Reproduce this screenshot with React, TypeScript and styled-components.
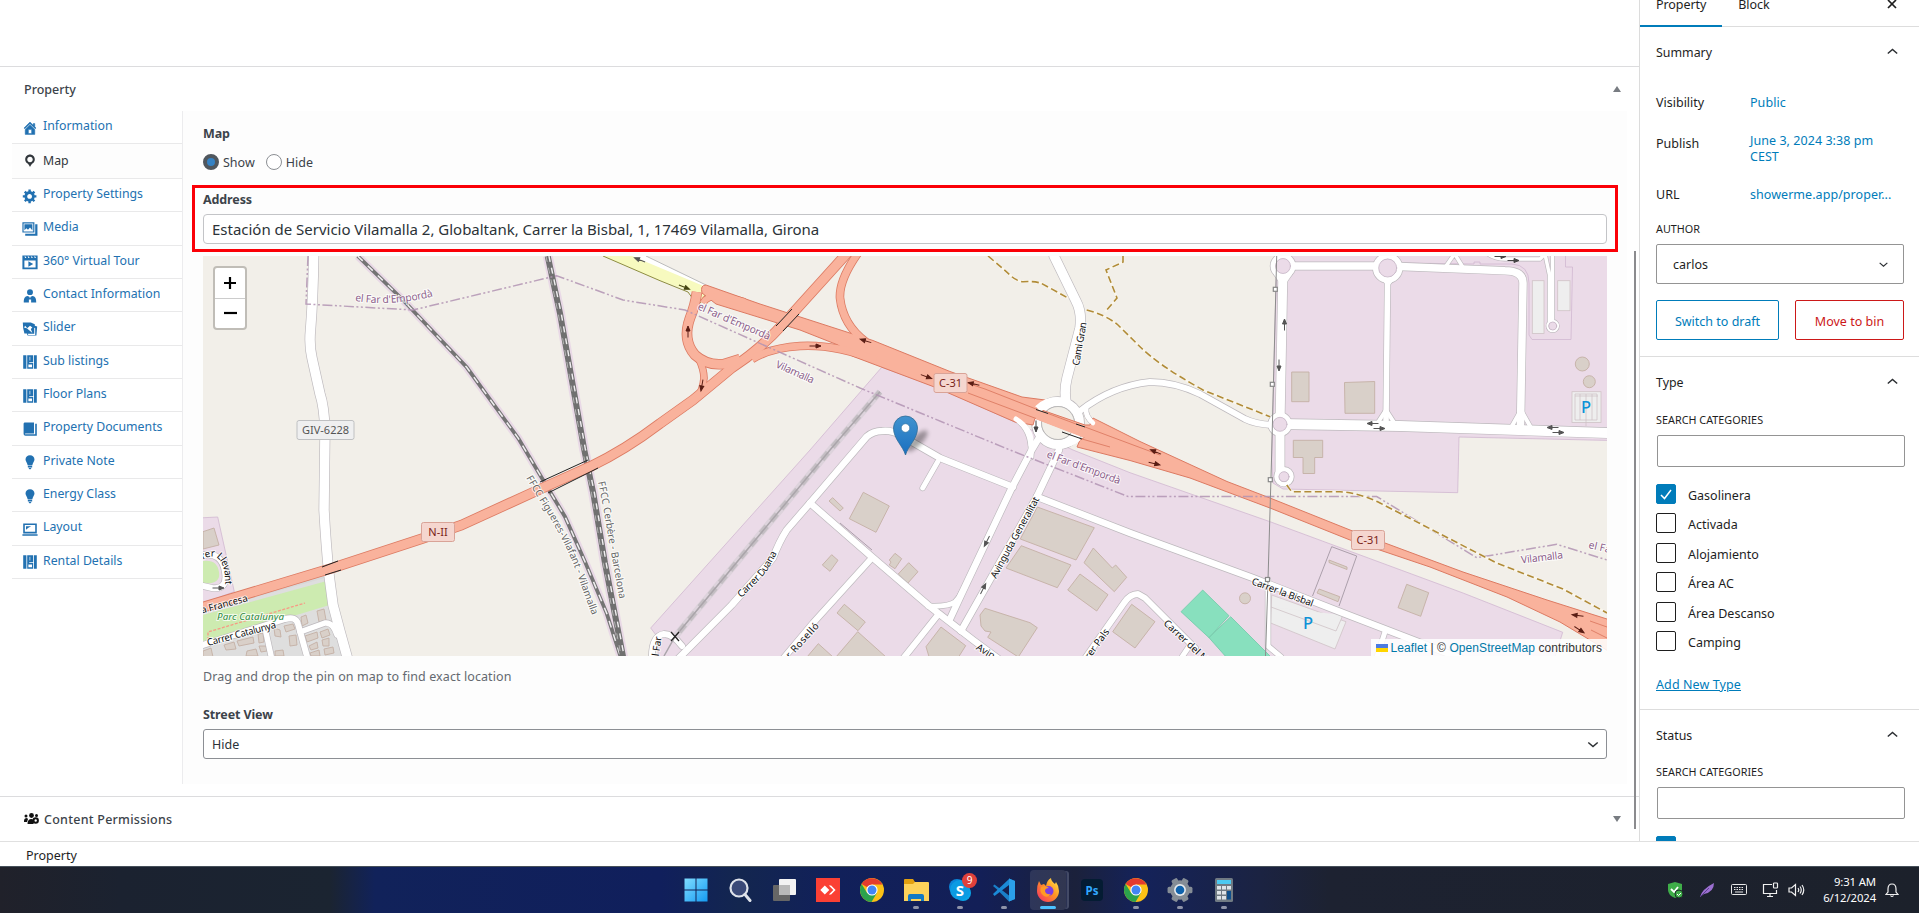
import React from "react";
import styled, { createGlobalStyle, css } from "styled-components";

const GlobalStyle = createGlobalStyle`
  *, *::before, *::after { box-sizing: border-box; }
  html, body { margin: 0; padding: 0; overflow: hidden; }
  body { font-family: "Noto Sans", "Open Sans", sans-serif; font-size: 12.5px; color: #1e1e1e; background: #fff; }
`;

const Screen = styled.div`
  width: 1919px;
  height: 913px;
  display: flex;
  flex-direction: column;
  background: #fff;
`;
const Workspace = styled.div`
  display: flex;
  height: 841px;
`;
const Editor = styled.main`
  position: relative;
  width: 1639px;
  height: 841px;
  padding-top: 66px;
`;
const ScrollThumb = styled.div`
  position: absolute;
  left: 1634px;
  top: 251px;
  width: 2px;
  height: 578px;
  background: #8b8b8e;
`;
const MetaHeader = styled.header<{ $height: number }>`
  display: flex;
  align-items: center;
  justify-content: space-between;
  height: ${(p) => p.$height}px;
  padding: 0 18px 0 24px;
  border-top: 1px solid #dcdcde;
  font-weight: 500;
  color: #3c434a;
`;
const HeaderTitle = styled.span<{ $spacing?: number }>`
  display: flex;
  align-items: center;
  gap: 5px;
  letter-spacing: ${(p) => p.$spacing ?? 0}px;
`;
const Triangle = styled.i<{ $down?: boolean }>`
  border: 4px solid transparent;
  ${(p) =>
    p.$down
      ? css`border-top: 6px solid #787c82; border-bottom: 0;`
      : css`border-bottom: 6px solid #787c82; border-top: 0;`}
`;
const MetaBody = styled.div`
  display: flex;
  height: 673px;
  margin: 0 12px 12px;
`;
const Tabs = styled.nav`
  width: 170px;
  font-size: 12.3px;
`;
const Tab = styled.a<{ $active?: boolean }>`
  display: flex;
  align-items: center;
  gap: 4px;
  height: ${(p) => (p.$active ? 34.6 : 33.33)}px;
  padding: ${(p) => (p.$active ? "0 0 2px 9px" : "0 0 3px 9px")};
  border-bottom: 1px solid #e9e9ea;
  color: ${(p) => (p.$active ? "#32373c" : "#2271b1")};
  background: ${(p) => (p.$active ? "#fdfdfd" : "#fff")};
  svg { margin-top: ${(p) => (p.$active ? 2 : 4)}px; }
`;
const Panel = styled.section`
  display: flex;
  flex-direction: column;
  width: 1445px;
  padding: 14px 20px 0;
  border-left: 1px solid #ececee;
  background: #fdfdfd;
`;
const FieldLabel = styled.div<{ $gap?: number }>`
  height: 18px;
  line-height: 18px;
  margin-bottom: ${(p) => p.$gap ?? 0}px;
  font-weight: 700;
  letter-spacing: -0.12px;
  color: #3c434a;
`;
const RadioRow = styled.div`
  display: flex;
  gap: 11px;
  height: 20px;
  margin-bottom: 19px;
  color: #3c434a;
`;
const RadioLabel = styled.label`
  display: flex;
  align-items: center;
  gap: 4px;
`;
const Radio = styled.span<{ $checked?: boolean }>`
  width: 16px;
  height: 16px;
  border-radius: 50%;
  border: ${(p) => (p.$checked ? "4px solid #50575e" : "1px solid #8c8f94")};
  background: ${(p) => (p.$checked ? "#3582c4" : "#fff")};
`;
const Highlight = styled.div`
  position: absolute;
  left: 192px;
  top: 185px;
  width: 1426px;
  height: 67px;
  border: 3px solid #fb0007;
`;
const AddressInput = styled.div`
  height: 30px;
  line-height: 29px;
  padding-left: 8px;
  margin-bottom: 12px;
  border: 1px solid #c3c4c7;
  border-radius: 4px;
  background: #fff;
  font-size: 15px;
  letter-spacing: -0.015px;
  color: #2c3338;
`;
const MapBox = styled.div`
  position: relative;
  height: 400px;
  flex: none;
  > svg { display: block; }
`;
const ZoomControl = styled.div`
  position: absolute;
  left: 10px;
  top: 10px;
  width: 34px;
  height: 64px;
  border: 2px solid #c0bdb7;
  border-radius: 4px;
  background: #fff;
`;
const ZoomButton = styled.div`
  display: flex;
  align-items: center;
  justify-content: center;
  height: 30px;
  & + & { border-top: 1px solid #ccc; padding-bottom: 2px; }
`;
const Attribution = styled.div`
  position: absolute;
  right: 0;
  bottom: 0;
  display: flex;
  align-items: center;
  gap: 3px;
  height: 17px;
  padding: 0 5px;
  background: rgba(255, 255, 255, 0.85);
  font: 12px "Liberation Sans", sans-serif;
  letter-spacing: 0.07px;
  color: #333;
  white-space: pre;
  b { font-weight: 400; color: #0078a8; }
`;
const Hint = styled.p`
  height: 18px;
  line-height: 18px;
  margin: 12px 0 20px;
  letter-spacing: 0.09px;
  color: #646970;
`;
const StreetSelect = styled.div`
  display: flex;
  align-items: center;
  justify-content: space-between;
  height: 30px;
  padding: 0 6px 0 8px;
  border: 1px solid #8c8f94;
  border-radius: 3px;
  background: #fff;
  color: #2c3338;
`;
const Breadcrumb = styled.footer`
  height: 25px;
  padding: 0 26px;
  line-height: 27px;
  border-top: 1px solid #e0e0e0;
`;

/* Settings sidebar */
const Sidebar = styled.aside`
  width: 280px;
  height: 841px;
  overflow: hidden;
  border-left: 1px solid #dcdcdc;
`;
const SideTabs = styled.div`
  display: flex;
  height: 27px;
  border-bottom: 1px solid #ddd;
`;
const SideTab = styled.div<{ $active?: boolean }>`
  height: 27px;
  padding: 0 16px;
  line-height: 9px;
  letter-spacing: -0.07px;
  border-bottom: ${(p) => (p.$active ? "2px solid #007cba" : "0")};
`;
const CloseSlot = styled.div`
  margin: -3px 21px 0 auto;
`;
const Section = styled.section<{ $height: number }>`
  height: ${(p) => p.$height}px;
  padding: 0 14px 0 16px;
  border-bottom: 1px solid #ddd;
`;
const SectionHead = styled.h2<{ $height: number }>`
  display: flex;
  align-items: center;
  justify-content: space-between;
  height: ${(p) => p.$height}px;
  margin: 0;
  padding-right: 7px;
  font-size: 12.4px;
  font-weight: 400;
  svg { margin-top: -2px; }
`;
const InfoRow = styled.div<{ $height: number; $lift?: number }>`
  display: flex;
  align-items: center;
  height: ${(p) => p.$height}px;
  line-height: 15.8px;
  > span { width: 94px; margin-top: ${(p) => -(p.$lift ?? 0)}px; }
`;
const Value = styled.a`
  width: 150px;
  color: #007cba;
  letter-spacing: 0.05px;
`;
const Caps = styled.div<{ $top: number }>`
  height: 16px;
  line-height: 16px;
  margin: ${(p) => p.$top}px 0 7px;
  font-size: 10.8px;
  letter-spacing: 0.02px;
  text-transform: uppercase;
`;
const AuthorSelect = styled.div`
  display: flex;
  align-items: center;
  justify-content: space-between;
  width: 248px;
  height: 40px;
  padding: 0 15px 0 16px;
  border: 1px solid #949494;
  border-radius: 2px;
`;
const ButtonRow = styled.div`
  display: flex;
  gap: 16px;
  margin-top: 16px;
`;
const OutlineButton = styled.div<{ $color: string; $width: number }>`
  width: ${(p) => p.$width}px;
  height: 40px;
  line-height: 41px;
  text-align: center;
  border: 1px solid ${(p) => p.$color};
  border-radius: 2px;
  color: ${(p) => p.$color};
`;
const SearchInput = styled.div`
  width: 248px;
  height: 32px;
  margin-left: 1px;
  border: 1px solid #949494;
  border-radius: 2px;
`;
const CheckList = styled.div`
  margin-top: 17px;
`;
const CheckRow = styled.label`
  display: flex;
  gap: 12px;
  height: 29.45px;
  line-height: 23px;
`;
const CheckBox = styled.span<{ $checked?: boolean }>`
  display: flex;
  width: 20px;
  height: 20px;
  border: 1px solid ${(p) => (p.$checked ? "#007cba" : "#1e1e1e")};
  border-radius: 2px;
  background: ${(p) => (p.$checked ? "#007cba" : "#fff")};
`;
const AddLink = styled.a`
  display: block;
  margin-top: 15px;
  color: #007cba;
  letter-spacing: 0.1px;
  text-decoration: underline;
`;

/* Taskbar */
const Taskbar = styled.div`
  display: flex;
  align-items: flex-start;
  height: 47px;
  border-top: 1px solid #46505a;
  padding-left: 674px;
  background: linear-gradient(90deg, #20212a 0, #1b2230 120px, #1b2431 330px, #11225a 375px, #101f5c 660px, #13264f 740px, #11205a 830px, #131f57 980px, #1b213b 1075px, #14225a 1140px, #1b2342 1260px, #1d2231 1330px, #1c212b 1919px);
`;
const AppSlot = styled.div<{ $active?: boolean }>`
  position: relative;
  display: flex;
  align-items: center;
  justify-content: center;
  width: 36px;
  height: 40px;
  margin: 3px 4.02px 0;
  border-radius: 4px;
  ${(p) =>
    p.$active &&
    css`background: rgba(255, 255, 255, 0.1); box-shadow: 2px 0 0 -1px #2a3153, 4px 0 0 -1px #434a66;`}
`;
const RunDot = styled.i<{ $active?: boolean }>`
  position: absolute;
  bottom: 1px;
  width: ${(p) => (p.$active ? 16 : 6)}px;
  height: 3px;
  border-radius: 2px;
  background: ${(p) => (p.$active ? "#4cc2ff" : "#8e93a8")};
`;
const Badge = styled.span`
  position: absolute;
  left: 20px;
  top: 3px;
  width: 15px;
  height: 15px;
  border-radius: 50%;
  background: #e0403a;
  color: #fff;
  font-size: 10px;
  line-height: 15px;
  text-align: center;
`;
const Tray = styled.div`
  display: flex;
  align-items: center;
  height: 46px;
  margin-left: auto;
  padding-right: 20px;
`;
const TrayIcon = styled.div<{ $gap: number }>`
  display: flex;
  margin-right: ${(p) => p.$gap}px;
`;
const Clock = styled.div`
  width: 62px;
  margin-right: 9px;
  font-size: 11.3px;
  line-height: 16px;
  letter-spacing: -0.1px;
  text-align: right;
  color: #fff;
  white-space: nowrap;
`;

/* ---------- icons ---------- */
const grid = (
  <path fillRule="evenodd" d="M1.500 1.500h4v17h-4zM6.500 1.500h7.500v17H6.500zM9 10v1h5v-1zM9.500 3.500v4.500h.8V3.500zM8 13v3.500h4.500V13zM15 1.500h3.500v17H15z" />
);
const bulb = <path d="M10 1.500c-3.300 0-5.600 2.400-5.600 5.300 0 2.400 2 3.800 2.700 7.200h5.800c.7-3.400 2.700-4.800 2.700-7.200 0-2.900-2.300-5.300-5.600-5.300zM7.300 14.800h5.400v2H7.300zM8.200 17.500h3.600L10.800 19H9.200z" />;
const tabIcons: Record<string, React.ReactNode> = {
  home: <path d="M16 8.500l1.530 1.530-1.060 1.060L10 4.600l-6.470 6.490-1.060-1.060L10 2.500l4 4v-2h2v4zm-6-2.460l6 5.990V18H4v-5.970zM12 17v-5H8v5h4z" stroke="currentColor" strokeWidth=".6" />,
  pin: <path d="M10 2C6.690 2 4 4.690 4 8c0 2.020 1.170 3.710 2.530 4.890.43.37 1.180.96 1.850 1.830.74.97 1.410 2.010 1.620 2.710.21-.7.88-1.740 1.620-2.710.67-.87 1.420-1.460 1.850-1.830C14.830 11.710 16 10.020 16 8c0-3.310-2.690-6-6-6zm0 2.560c1.900 0 3.440 1.540 3.440 3.440S11.900 11.440 10 11.440 6.560 9.900 6.560 8 8.100 4.560 10 4.560z" />,
  gear: <path d="M18 12h-2.180c-.17.7-.44 1.350-.81 1.930l1.540 1.540-2.100 2.100-1.540-1.540c-.58.36-1.230.63-1.910.79V19H8v-2.180c-.68-.16-1.330-.43-1.910-.79l-1.540 1.540-2.120-2.120 1.540-1.540c-.36-.58-.63-1.230-.79-1.910H1V9.030h2.170c.16-.7.44-1.350.8-1.940L2.430 5.550l2.100-2.100 1.540 1.540c.58-.37 1.240-.64 1.930-.81V2h3v2.180c.68.16 1.330.43 1.910.79l1.540-1.540 2.120 2.120-1.540 1.540c.36.59.64 1.240.8 1.940H18V12zm-8.500 1.500c1.660 0 3-1.340 3-3s-1.340-3-3-3-3 1.340-3 3 1.340 3 3 3z" />,
  media: <path fillRule="evenodd" d="M.5 1.500h15v13H.5zM2 3v10h12V3zM3 4h10v8l-3-4-2.500 3-2-2L3 11.500zM16.500 4h2.800v14.500H4V16h12.500z" />,
  video: <path fillRule="evenodd" d="M.5 2h19v17H.5zM3 8v9h14V8zM8 9l6 3.500L8 16zM3 3l1 2h1.500l-1-2zM7 3l1 2h1.500l-1-2zM11 3l1 2h1.500l-1-2zM15 3l1 2h1.500l-1-2z" />,
  person: <path d="M10 1.500a3.700 3.700 0 1 1 0 7.400A3.700 3.700 0 0 1 10 1.500zM7 10l2.200 1L10 13l.8-2L13 10c3.600.6 4.800 2.800 4.800 8h-6.400v-3.500H8.600V18H2.200c0-5.200 1.200-7.400 4.800-8z" />,
  slides: <path fillRule="evenodd" d="M1 2h10l5 2v2l3 1-1 11H7l-1-2.500H3L1.500 9zM4 6l2.500 3 3.500-3 3 2-2 2 2 5-7-6-3.500-1zM7 16l1 1.500h8.500V9l-1.200-.6V16z" />,
  grid,
  book: <path d="M2 3.500C2 2.500 3 2 4 2h11v13.500H4.500c-1.300 0-1.300 1.200 0 1.200h12V3.500H18.500V18.500H4.500C3 18.500 2 17.500 2 16z" />,
  bulb,
  laptop: <path fillRule="evenodd" d="M1.500 3h17v12.500h-17zM3.500 5v8.500h13V5zM5 6.500h6.500L8 8.500 5 11zM.5 16.500h19v2H.5z" />,
};
const TabGlyph = ({ name }: { name: string }) => (
  <svg width="18" height="16" viewBox="0 0 20 20" fill="currentColor" color="currentColor" fillRule="evenodd">{tabIcons[name]}</svg>
);
const Chevron = ({ up, size = 11 }: { up?: boolean; size?: number }) => (
  <svg width={size} height={7} viewBox="0 0 11 7" fill="none" stroke="#2c2f33" strokeWidth="1.500">
    <path d={up ? "M.8 5.500 5.500 1.500l4.700 4" : "M.8 1.500 5.500 5.500l4.700-4"} />
  </svg>
);

/* ---------- map drawing ---------- */
const buildings = [
  "863.3,492.3 889.3,506 876,532.3 849.3,518.7", "832.7,497.7 843.3,508 840,511 829,501",
  "831.7,554.7 838,560.3 830,571.3 822.3,565", "895,553.3 901.7,558.7 895,568.7 889.3,565 891,562 889.3,560",
  "908.7,562.7 918,571.7 907.7,583.3 898.3,574", "1037.3,507 1094.3,527.7 1076,560 1020.3,539",
  "1021.3,545.7 1071,565 1057.3,587.7 1006,568", "1093.3,548 1112.3,568 1115.7,565 1126.7,577.3 1114.3,591.7 1084,562.7",
  "1080,574 1108,594.7 1096.7,611 1067.7,590", "985,608.3 1030,622.7 1037.3,627.7 1018.3,657 987.7,637.3 991,632 985,631 981,626 980,615",
  "941,627 965.7,645.7 956.7,660 930,660 926,646.7", "844.3,604.3 865.3,622 858,630.7 837,613",
  "857.7,631.7 886,657 836,657", "818.3,643.7 833,657 807,657", "1131.7,604.3 1155,621.7 1135,648 1112.7,631.7",
  "1406.7,584.3 1428.7,592.7 1420.7,616.3 1398,607.7", "1329,560 1347,567 1347,569.5 1329,562.5",
  "1319,589 1339.7,596.7 1338,601.7 1317,593", "203,531.7 214,528 219,545 203,549",
  "1291.7,372 1309,372 1309,401.7 1291.7,401.7", "1344.5,382.5 1374.7,381.5 1374.7,413.3 1345,413.3",
  "1293.3,440.3 1322.7,440.3 1322.7,457.5 1314.7,457.5 1314.7,473.5 1303,473.5 1303,457.5 1293.3,457.5",
  "301,617 306,615 308,623 302,626", "317,611 324,609 326,620 319,622", "284,626 293,624 295,629 286,632",
  "274,628 280,630 281,637 275,636", "289,636 296,635 297,645 290,646", "305,636 317,632 318,638 307,642",
  "320,632 328,629 330,635 322,638", "237,641 253,637 254,643 239,646", "258,634 263,633 264,642 259,643",
  "224,645 234,642 236,649 226,650", "203,651 211,648 213,657 203,657", "247,651 256,649 258,656 246,656",
  "275,651 283,650 284,656 275,656", "309,646 317,642 318,648 311,650", "322,640 329,638 329,646 323,646",
  "310,653 319,650 320,656 311,656", "324,649 333,647 334,653 325,655", "259,646 266,646 267,651 261,652",
];

interface RoadSpec { d: string; w: number }
const whiteRoads: RoadSpec[] = [
  { d: "M313.700 250V256Q313 300 310.500 330Q309 345 312 358L320 394Q324 406 325 430L324 510Q326 545 329 575L333 605Q340 632 348 660", w: 9.5 },
  { d: "M203 645 285 619Q296 616 298 624L308 660", w: 6 }, { d: "M300 632 325 623Q333 622 337 635", w: 5.5 }, { d: "M265 628 272 660", w: 5.5 },
  { d: "M203 555Q222 552 225 572Q228 590 212 588L203 586", w: 6 },
  { d: "M677 660 731.700 605 773 558Q779 542 786.700 530L810 503 866.700 436.700Q873 431 882 431 892 430 900 435L940 458 1013 487", w: 6.5 },
  { d: "M937.700 461.700 922.700 488", w: 5 }, { d: "M810 503 871.700 556.700 930 606.700 973 640 1000 660", w: 6.5 },
  { d: "M870 560 813 623 782 660", w: 6 }, { d: "M937 616 902 660", w: 6 },
  { d: "M928 606Q948 607 955 602Q960 597 962 592", w: 5 },
  { d: "M1040 436 1031.700 450 1011.700 488 962 593 950 619", w: 6.5 },
  { d: "M1016 419Q1033 430 1031 457", w: 5 }, { d: "M1059 445V450L1036.700 497 961 631", w: 6.5 },
  { d: "M1036.700 496.700 1130 533 1253 578 1343 613 1460 658", w: 6.5 },
  { d: "M1268 580V646L1281 657", w: 5 }, { d: "M1385 631.700 1376 660", w: 5 },
  { d: "M1084 660 1124 603Q1130 594 1138 594L1145 598 1195 648", w: 6 }, { d: "M1188 648 1182 657", w: 5 },
  { d: "M1054 250V256L1076 301Q1082 312 1080 328L1067 378Q1064 390 1066 402", w: 9.5 },
  { d: "M1080 411Q1112 386 1150 382Q1175 382 1200 394L1245 419Q1255 424 1272 425", w: 6 },
  { d: "M1086 408Q1085 416 1093 423", w: 4.5 },
  { d: "M652 660Q651 636 664 634Q673 634 682 646", w: 6 },
  { d: "M1283 266H1387.700L1505 270.700Q1523 271 1523 283L1520.500 424", w: 7.5 },
  { d: "M1283 266 1280 424V472", w: 9 }, { d: "M1387.700 268 1386 424", w: 5.5 },
  { d: "M1280 424 1400 426 1610 433", w: 10 },
  { d: "M1386 410 1377 424M1386 410 1395 424M1521 410 1512 426M1521 410 1530 426M1388 284 1380 275M1388 284 1396 275M1283 284 1276 274M1283 284 1290 274", w: 4 },
  { d: "M1453 256 1444 269M1456 256 1464 269M1488 254Q1495 259 1505 259H1540L1545 254", w: 3.5 },
  { d: "M1545 254 1549.500 275V322M1552.500 254V322", w: 3.5 },
];
const orangeRoads: RoadSpec[] = [
  { d: "M200 608 331.700 568.300 423.300 538.300 461.700 525 543.300 487.700 590 466.700Q625 450 660 423.500L693 400 731.700 368Q760 350 786.700 320L850 250", w: 9 },
  { d: "M858 253Q839 280 840 298Q843 325 866 342", w: 7 },
  { d: "M697 292Q695 306 690 318Q682 340 695 355Q707 366 724 364L740 359", w: 9 },
  { d: "M699 359Q704 370 704 378Q703 390 697 398", w: 6 },
  { d: "M752 359Q770 348 800 346 835 344 876 360", w: 7 },
  { d: "M703 303Q707 295 722 296L745 302", w: 6 },
];
const borders = [
  "M308 256 306 304 413 310 556.700 275.700 623 300 685 310 860 388 1010 450 1128 496.500H1376.700L1476.700 557.700 1556.700 544.300 1607 560",
];
const paths = [
  "M988 256Q1000 266 1010 275 1016 281 1023 281.700 1035 281 1041.700 283.500L1068 298M1086.700 310Q1106 315 1118 325L1140 346.700Q1158 365 1203 390L1270 416.700",
  "M1123 256V262L1106 270 1117 298 1105 312",
  "M1286.700 485 1291.700 491.700H1340Q1360 493 1380 503L1496.700 563 1563 589 1607 613",
];
const arrows: [number, number, number, string][] = [
  [684, 287, 22, "#454512"], [640, 260, 202, "#555"], [688, 332, -90, "#5a1d14"], [702, 385, 100, "#5a1d14"],
  [815, 346, 0, "#5a1d14"], [866, 341, 197, "#5a1d14"], [926, 376.5, 20, "#5a1d14"], [974, 384, 194, "#5a1d14"],
  [1036, 426, 90, "#444"], [987, 541, 117, "#555"], [983, 589, -63, "#555"], [1284.5, 325, -90, "#555"],
  [1279, 365, 90, "#555"], [1373, 423.5, 180, "#555"], [1379, 428.5, 0, "#555"], [1553, 427.5, 180, "#555"],
  [1558, 432.5, 0, "#555"], [1513, 260.5, 0, "#444"], [1500, 256.5, 0, "#444"], [1156, 452, 203, "#5a1d14"], [1154, 463.5, 13, "#5a1d14"],
  [1578, 615.5, 187, "#5a1d14"], [1579, 629.5, 33, "#5a1d14"], [218, 588, 0, "#555"],
];
const highSpeedRail = "M357.700 256 403 300 466.700 367.300 518.300 438.300 545 483.300 565 516.700 585 561.700 606.700 613.300 621 658";
const mainRail = "M547.700 256 560 313.300 584.300 450 593.300 493.300 605 563.300 623.300 658";
const oldRail = "M880 391.700 830 450 675 636.700";

const MapLabel = styled.text<{ $kind?: "admin" | "rail" | "street" }>`
  font-family: "Noto Sans", sans-serif;
  font-size: ${(p) => (p.$kind === "street" ? 9.8 : p.$kind === "rail" ? 10 : 10.4)}px;
  fill: ${(p) => (p.$kind === "admin" ? "#8d618b" : p.$kind === "rail" ? "#666" : "#111")};
  stroke: rgba(255, 255, 255, 0.75);
  stroke-width: 2px;
  paint-order: stroke;
`;
const ParkLabel = styled(MapLabel)`
  fill: #2c8a3c;
  font-style: italic;
  font-size: 9.8px;
`;
const ShieldText = styled.text`
  font-family: "Noto Sans", sans-serif;
  font-size: 11px;
  text-anchor: middle;
`;
const Label = (p: { x: number; y: number; r: number; kind: "admin" | "street"; len?: number; children: string }) => (
  <MapLabel $kind={p.kind} textLength={p.len} transform={`translate(${p.x} ${p.y}) rotate(${p.r})`}>{p.children}</MapLabel>
);
const Shield = (p: { x: number; y: number; w: number; text: string; gray?: boolean }) => (
  <g>
    <rect x={p.x - p.w / 2} y={p.y - 9} width={p.w} height={19} rx="2" fill={p.gray ? "#efeff0" : "#f5d6cf"} stroke={p.gray ? "#bfc0c2" : "#d9a397"} />
    <ShieldText x={p.x} y={p.y + 4.5} fill={p.gray ? "#555" : "#7a2419"}>{p.text}</ShieldText>
  </g>
);

const MapDrawing = () => (
  <svg width="1404" height="400" viewBox="203 256 1404 400" fill="none">
    <defs>
      <linearGradient id="pin" x1="0" y1="0" x2="0" y2="1"><stop offset="0" stopColor="#4193cf" /><stop offset="1" stopColor="#1a6fc0" /></linearGradient>
      <filter id="soft" x="-50%" y="-100%" width="200%" height="300%"><feGaussianBlur stdDeviation="2" /></filter>
      <path id="farTop" d="M355 301Q395 307 438 295" />
      <path id="figueres" d="M526 478Q538 498 548 514 570 552 577 574L593 618" />
      <path id="cerbere" d="M598 482Q604 510 608 536L620 602" />
      <path id="duana" d="M741 598Q760 580 767 571L780 548" />
      <path id="llevant" d="M203 560Q215 552 221 562 226 570 225 590" />
    </defs>
    <rect x="203" y="256" width="1404" height="400" fill="#f2efe9" />
    <g fill="#ebdbe8" stroke="#d0b8d0" strokeWidth=".8">
      <path d="M881.700 367.300 936.700 387 1017 423 1073 450 1130 472.700 1270 521.700 1463 593 1562.700 632.300 1554 660H659L656 635 650.700 628 810 450Z" />
      <path d="M1276.700 250V256L1271.700 460 1273 483 1283 489 1457.700 492.700 1459 437 1612 440.500V250Z" />
      <path d="M198 518 217.700 517 234.300 591.700 198 605Z" />
      <path d="M1403 263 1474 264V262H1480V264H1512Q1529 265 1529 283V335L1532 339.500H1571L1572.500 267H1565.500V256" />
    </g>
    <path d="M203 610 326 576 334 612 347 656H203Z" fill="#dedede" />
    <path d="M203 615 326.700 581 329.500 605 300 614 203 641ZM203 561Q217 559 219 572 221 585 203 583Z" fill="#cdebb0" />
    <path d="M208 640V632L305 603" stroke="#f79a85" strokeWidth="1.300" strokeDasharray="3 1.500" />
    <path d="M203 609 326 575" stroke="#d8d8d8" strokeWidth="5" />
    <g fill="#88e0be" stroke="#6fcaa7" strokeWidth=".8">
      <path d="M1202.700 590 1229 615.700 1209 637.700 1181 611.700Z" /><path d="M1230.700 616.700 1272 658H1227L1209 637.700Z" />
    </g>
    <g fill="#eee" stroke="#cfc3c6" strokeWidth=".8">
      <path d="M1271.700 595 1346 621.700 1335 649 1270.700 623Z" /><rect x="1572" y="391.700" width="29" height="30.700" />
      <rect x="1532.300" y="280.700" width="11.700" height="52.700" /><rect x="1557.700" y="280.700" width="12.300" height="30" />
      <path d="M1271 607 1336 631 1343 615M1575 394H1597V420H1575ZM1580 394V420M1592 394V420M1586 394V426M1575 396H1598" />
    </g>
    <g fill="#d9d0c9" stroke="#c4b0a5" strokeWidth=".9">
      {buildings.map((b) => <polygon key={b} points={b} />)}
      <circle cx="1582.300" cy="364" r="7" /><circle cx="1589.300" cy="381.700" r="6" /><circle cx="1245" cy="598.300" r="5.500" />
    </g>
    <path d="M1312.500 596 1331.700 546.700 1356.700 556 1339 606M840 523 872 550" stroke="#9b8f9b" strokeWidth=".8" />
    <g strokeLinejoin="round" strokeLinecap="round">
      <g stroke="#bdb9bd">
        {whiteRoads.map((r) => <path key={r.d} d={r.d} strokeWidth={r.w + 1.3} />)}
        <circle cx="1058" cy="423" r="21.500" strokeWidth="10.500" />
        <circle cx="1283" cy="266" r="10" strokeWidth="6.500" /><circle cx="1387.700" cy="268" r="12" strokeWidth="7" /><circle cx="1280" cy="424.300" r="9.500" strokeWidth="6" />
        <circle cx="1284" cy="476.700" r="7.500" strokeWidth="6" /><circle cx="1552.700" cy="326" r="5.200" strokeWidth="3.500" />
      </g>
      <g fill="#ebdbe8"><circle cx="1283" cy="266" r="8" /><circle cx="1387.700" cy="268" r="9" /><circle cx="1280" cy="424.300" r="7" /></g>
      <g stroke="#fff">
        {whiteRoads.map((r) => <path key={r.d} d={r.d} strokeWidth={r.w} />)}
        <circle cx="1058" cy="423" r="21.500" strokeWidth="9" />
        <circle cx="1283" cy="266" r="10" strokeWidth="5" /><circle cx="1387.700" cy="268" r="12" strokeWidth="5.500" /><circle cx="1280" cy="424.300" r="9.500" strokeWidth="4.500" />
        <circle cx="1284" cy="476.700" r="7.500" strokeWidth="4.500" /><circle cx="1552.700" cy="326" r="5.200" strokeWidth="2.300" />
      </g>
      <circle cx="1058" cy="423" r="16.500" fill="#f2efe9" stroke="#aaa" strokeWidth=".7" />
      <g fill="#ebdbe8" stroke="#c5b5c5" strokeWidth=".8"><circle cx="1283" cy="266" r="7.500" /><circle cx="1387.700" cy="268" r="9" /><circle cx="1280" cy="424.300" r="7" /><circle cx="1284" cy="476.700" r="5" /><circle cx="1552.700" cy="326" r="4" /></g>
    </g>
    {/* railways */}
    <g>
      <path d={oldRail} stroke="#ddd3dc" strokeWidth="7" />
      <path d={oldRail} stroke="#c4bec3" strokeWidth="5.500" strokeDasharray="9 7" />
      <path d={`${oldRail} 664 656`} stroke="#aaa5aa" strokeWidth="1.500" />
      <path d={highSpeedRail} stroke="#e9d9e6" strokeWidth="8" />
      <path d={mainRail} stroke="#e9d9e6" strokeWidth="10" />
      <path d={highSpeedRail} stroke="#747474" strokeWidth="3.800" />
      <path d={highSpeedRail} stroke="#f0eef0" strokeWidth="1.500" strokeDasharray="7 7" />
      <path d={mainRail} stroke="#707070" strokeWidth="6" />
      <path d={mainRail} stroke="#f0eef0" strokeWidth="1.400" strokeDasharray="6 6" transform="translate(1.200 0)" />
      <path d={mainRail} stroke="#d0d0d0" strokeWidth=".7" strokeDasharray="6 6" transform="translate(-1.800 0)" />
    </g>
    {/* primary roads */}
    <path d="M632 256H646L706 285 700 292Z" fill="#fff" /><path d="M646 256 706 285" stroke="#bbb" />
    <path d="M603 256H632L706 287 708 300 700 303 690 291 660 280.700Z" fill="#f7fabf" />
    <path d="M603 256 660 280.700 688 292 693 299M700 303 706 294" stroke="#8d8c42" />
    <g strokeLinejoin="round">
      {orangeRoads.map((r) => <path key={r.d} d={r.d} stroke="#dc7a62" strokeWidth={r.w + 1.6} />)}
      <path d="M706 285 760 304 873 340.500 950 371.500 1022 397 1045 400 1040 404 1036 408 1085 425 1090 425 1093 418 1140 441.500 1227 481.500 1270 498 1350 530 1463 572 1547 600 1610 620V652L1560 622 1507 597 1430 567 1350 540 1270 508 1190 478 1130 460.500 1077 447 1080 440 1085 437 1035 418 1033 425 1015 422 937 388 852 356 838 345 800 330 716 304 702 293Q700 285 706 285Z" fill="#f9b29c" stroke="#dc7a62" strokeWidth="1" />
      {orangeRoads.map((r) => <path key={r.d} d={r.d} stroke="#f9b29c" strokeWidth={r.w} />)}
    </g>
    <g stroke="#fff" strokeWidth="8"><path d="M1038 409Q1046 401 1058 401" /><path d="M1058 444Q1069 445 1078 437" /></g>
    <path d="M1016 419Q1033 430 1031 445" stroke="#fff" strokeWidth="5" strokeLinecap="round" />
    <path d="M1086 408Q1085 416 1093 423" stroke="#fff" strokeWidth="4.500" strokeLinecap="round" />
    <path d="M1035 409 1085 426 1110 434 1110 445 1082 437 1030 417Z" fill="#f9b29c" />
    <path d="M1036 409.500 1048 413.500M1076 424 1085 427M1062 432 1082 439" stroke="#222" strokeWidth="1" />
    <path d="M955 379 985 389 1036 409M968 393 1036 418.500M1048 413.500 1076 424M1085 427 1160 455M1082 439 1110 447M1590 621 1607 627M1591 630 1607 638" stroke="#dc7a62" strokeWidth=".9" />
    <path d="M776 326 792 309M783 331 799 314M540 482 588 460M548 493 598 468M322 567 338 561M325 575 341 570" stroke="#222" />
    {borders.map((d) => <path key={d} d={d} stroke="#b193b3" strokeWidth="1.500" strokeDasharray="10 2.500 2 2.500 2 2.500" opacity=".85" />)}
    {paths.map((d) => <g key={d}><path d={d} stroke="#faf6ec" strokeWidth="2.500" /><path d={d} stroke="#b08b38" strokeWidth="1.600" strokeDasharray="7 3.500" /></g>)}
    <path d="M1276.700 256 1271.500 460 1268 580 1265.500 656" stroke="#8c8c8c" />
    <g fill="#fff" stroke="#888" strokeWidth="1.200">
      {[[1275.3, 289.3], [1272.3, 384.3], [1270.3, 479.7], [1267.5, 579.5]].map(([x, y]) => <rect key={y} x={x - 2} y={y - 2} width="4" height="4" />)}
    </g>
    <path d="M671 632 679 641M679 632 671 641" stroke="#222" strokeWidth="1.200" />
    {arrows.map(([x, y, r, c]) => (
      <path key={`${x}-${y}`} d="M-5.500 0H2M1-2 6 0 1 2Z" fill={c} stroke={c} strokeWidth="1" transform={`translate(${x} ${y}) rotate(${r})`} />
    ))}
    <MapLabel $kind="admin"><textPath href="#farTop" textLength="79">el Far d&apos;Empordà</textPath></MapLabel>
    <Label kind="admin" x={697} y={309} r={23.5} len={78}>el Far d'Empordà</Label>
    <Label kind="admin" x={775} y={367} r={24} len={41}>Vilamalla</Label>
    <Label kind="admin" x={1046} y={457} r={20.5} len={78}>el Far d'Empordà</Label>
    <Label kind="admin" x={1521.5} y={563.5} r={-7} len={42}>Vilamalla</Label>
    <Label kind="admin" x={1588} y={548} r={13}>el Far d'Empordà</Label>
    <Label kind="street" x={1079} y={366} r={-80} len={44}>Cami Gran</Label>
    <Label kind="street" x={996} y={579} r={-61.5} len={91}>Avinguda Generalitat</Label>
    <Label kind="street" x={790} y={659} r={-48} len={44}>r Roselló</Label>
    <Label kind="street" x={975.5} y={649} r={32}>Avinguda</Label>
    <Label kind="street" x={1087} y={663} r={-54}>rrer Pals</Label>
    <Label kind="street" x={1251} y={584} r={20.5} len={65}>Carrer la Bisbal</Label>
    <Label kind="street" x={1163} y={624} r={43}>Carrer del M</Label>
    <Label kind="street" x={202} y={613.5} r={-15} len={48}>a Francesa</Label>
    <Label kind="street" x={208} y={646} r={-15} len={71}>Carrer Catalunya</Label>
    <Label kind="street" x={658} y={662} r={-82}>el Far</Label>
    <MapLabel $kind="street"><textPath href="#duana" textLength="58">Carrer Duana</textPath></MapLabel>
    <MapLabel $kind="street"><textPath href="#llevant" textLength="44">rer Llevant</textPath></MapLabel>
    <MapLabel $kind="rail"><textPath href="#figueres" textLength="153">FFCC Figueres-Vilafant - Vilamalla</textPath></MapLabel>
    <MapLabel $kind="rail"><textPath href="#cerbere" textLength="119">FFCC Cerbère - Barcelona</textPath></MapLabel>
    <ParkLabel x="217" y="619.500" textLength="67">Parc Catalunya</ParkLabel>
    <Shield x={325.5} y={429.5} w={57} text="GIV-6228" gray />
    <Shield x={438} y={531.5} w={33} text="N-II" /><Shield x={950.5} y={382.5} w={33} text="C-31" /><Shield x={1368} y={539.5} w={33} text="C-31" />
    <g fill="#1092d6" fontFamily="Noto Sans" fontSize="16.500" fontWeight="500" textAnchor="middle"><text x="1586" y="412.500">P</text><text x="1308" y="629">P</text></g>
    <ellipse cx="917" cy="441" rx="14" ry="5" fill="#000" opacity=".35" transform="rotate(-45 917 441)" filter="url(#soft)" />
    <path d="M905.500 455C903 446 893.500 439 893.500 428A12 12 0 0 1 917.500 428C917.500 439 908 446 905.500 455Z" fill="url(#pin)" stroke="#2e6c97" strokeWidth=".8" />
    <circle cx="905.500" cy="428" r="4.300" fill="#fff" stroke="#3274a3" strokeWidth=".7" />
  </svg>
);

/* ---------- taskbar icons ---------- */
const Chrome = () => (
  <svg width="24" height="24" viewBox="0 0 24 24">
    <circle cx="12" cy="12" r="12" fill="#fbc116" /><path d="M12 12 1.600 6A12 12 0 0 1 22.400 6.500H12Z" fill="#e33b2e" />
    <path d="M1.600 6A12 12 0 0 0 11.500 24L17 14.700 7 14.700Z" fill="#2ba24c" /><circle cx="12" cy="12" r="5.600" fill="#fff" /><circle cx="12" cy="12" r="4.500" fill="#4285f4" />
  </svg>
);
const apps: { icon: React.ReactNode; dot?: boolean; active?: boolean; badge?: string }[] = [
  { icon: <svg width="24" height="24"><defs><linearGradient id="win" x2="1" y2="1"><stop stopColor="#7fdcff" /><stop offset="1" stopColor="#159bf2" /></linearGradient></defs><path d="M.5.500h11v11H.5zM12.500.500h11v11h-11zM.5 12.500h11v11H.5zM12.500 12.500h11v11h-11z" fill="url(#win)" /></svg> },
  { icon: <svg width="24" height="24" fill="none"><circle cx="11" cy="10" r="8.500" fill="#3b4a78" stroke="#dfe3ea" strokeWidth="2.200" /><path d="m17 16.500 5 6" stroke="#dfe3ea" strokeWidth="3" strokeLinecap="round" /></svg> },
  { icon: <svg width="25" height="24"><rect x="7" y="1" width="17" height="16" rx="1" fill="#f3f3f3" /><rect x="1" y="7" width="17" height="16" rx="1" fill="#666" /><path d="M7 7h11v10H7z" fill="#b9b9b9" /></svg> },
  { icon: <svg width="24" height="24"><path fill="#fb4034" d="M0 0h24v24H0z" /><path fill="#fff" d="m8.800 7.500 4.500 4.500-4.500 4.500L4.300 12zM12.800 7.500h2.300l4.500 4.500-4.500 4.500h-2.300l4.500-4.500z" /></svg> },
  { icon: <Chrome /> },
  { icon: <svg width="25" height="24"><path fill="#e2a010" d="M0 2q0-1 1-1h8l2 3v5H0z" /><path fill="#fdd25a" d="M0 6h9l2-2h13q1 0 1 1v18H0z" /><path fill="#1279c5" d="M4 23v-5q0-2 2-2h12q2 0 2 2v5h-3v-2H7v2z" /></svg>, dot: true },
  { icon: <svg width="24" height="24"><circle cx="9" cy="9" r="8" fill="#0a84d8" /><circle cx="15" cy="15" r="8" fill="#0aa5e8" /><circle cx="12" cy="12" r="10" fill="#0c9be3" /><text x="12" y="17.500" textAnchor="middle" fontSize="15" fontWeight="700" fill="#fff" fontFamily="Noto Sans">S</text></svg>, dot: true, badge: "9" },
  { icon: <svg width="24" height="24"><path fill="#1a7fc9" d="m17 .5 6 2.500v18l-6 2.500L4.500 11 1 8l1.500-1.500L17 17.500z" /><path fill="#2ba0ea" d="m17 .5 6 2.500v18l-6 2.500z" /><path fill="#1b8bd8" d="M2.500 18 1 16l16-15v6z" /></svg>, dot: true },
  { icon: <svg width="24" height="24"><defs><linearGradient id="fx" x1="1" x2="0" y2="1"><stop stopColor="#fff04f" /><stop offset=".45" stopColor="#ff9422" /><stop offset="1" stopColor="#f5286b" /></linearGradient></defs><path fill="url(#fx)" d="M1 13Q1 7 3 3l2 4 3-1 2 2q1-6 5-8 0 3 4 6l1-2q3 4 3 9a11 11 0 0 1-22 0z" /><circle cx="12.500" cy="13" r="5" fill="#7a3ee0" /><path fill="#ff9a24" d="M5 9q5-2 8 1-4 0-4 3 1 4 6 3-3 4-7 2-5-3-3-9z" /></svg>, active: true, dot: true },
  { icon: <svg width="22" height="24"><rect y="1" width="22" height="22" rx="4" fill="#041c33" /><text x="11" y="16.500" textAnchor="middle" fontSize="11.500" fontWeight="700" fill="#31a8ff" fontFamily="Noto Sans">Ps</text></svg> },
  { icon: <Chrome />, dot: true },
  { icon: <svg width="26" height="26" viewBox="0 0 24 24"><g fill="#858d96"><circle cx="12" cy="12" r="9" />{[0, 60, 120].map((a) => <rect key={a} x="9" y="0.500" width="6" height="23" rx="1.500" transform={`rotate(${a + 30} 12 12)`} />)}</g><circle cx="12" cy="12" r="5.500" fill="#e6eaee" /><circle cx="12" cy="12" r="4" fill="#0f62ac" /></svg>, dot: true },
  { icon: <svg width="18" height="24"><rect width="18" height="24" rx="1.500" fill="#707a83" /><path fill="#4cc9f0" d="M2 2h14v4H2z" /><path fill="#dfe4e8" d="M2 8h4v3.500H2zM7 8h4v3.500H7zM12 8h4v3.500h-4zM2 13h4v3.500H2zM7 13h4v3.500H7zM2 18h4v3.500H2zM7 18h4v3.500H7z" /><path fill="#0f4f8c" d="M12 13h4v8.500h-4z" /></svg>, dot: true },
];

const tabs: [string, string][] = [
  ["home", "Information"], ["pin", "Map"], ["gear", "Property Settings"], ["media", "Media"], ["video", "360° Virtual Tour"],
  ["person", "Contact Information"], ["slides", "Slider"], ["grid", "Sub listings"], ["grid", "Floor Plans"],
  ["book", "Property Documents"], ["bulb", "Private Note"], ["bulb", "Energy Class"], ["laptop", "Layout"], ["grid", "Rental Details"],
];
const types = ["Gasolinera", "Activada", "Alojamiento", "Área AC", "Área Descanso", "Camping"];

export default function App() {
  return (
    <Screen>
      <GlobalStyle />
      <Workspace>
        <Editor>
          <MetaHeader $height={45}>
            <HeaderTitle>Property</HeaderTitle>
            <Triangle />
          </MetaHeader>
          <MetaBody>
            <Tabs>
              {tabs.map(([icon, name]) => (
                <Tab key={name} $active={name === "Map"}><TabGlyph name={icon} />{name}</Tab>
              ))}
            </Tabs>
            <Panel>
              <FieldLabel $gap={9}>Map</FieldLabel>
              <RadioRow>
                <RadioLabel><Radio $checked />Show</RadioLabel>
                <RadioLabel><Radio />Hide</RadioLabel>
              </RadioRow>
              <FieldLabel $gap={5}>Address</FieldLabel>
              <AddressInput>Estación de Servicio Vilamalla 2, Globaltank, Carrer la Bisbal, 1, 17469 Vilamalla, Girona</AddressInput>
              <MapBox>
                <MapDrawing />
                <ZoomControl>
                  <ZoomButton><svg width="14" height="14"><path d="M1 7h12M7 1v12" stroke="#000" strokeWidth="2.200" /></svg></ZoomButton>
                  <ZoomButton><svg width="14" height="14"><path d="M1 7h13" stroke="#000" strokeWidth="2.200" /></svg></ZoomButton>
                </ZoomControl>
                <Attribution>
                  <svg width="12" height="8"><path fill="#4c7be1" d="M0 0h12v4H0z" /><path fill="#ffd500" d="M0 4h12v4H0z" /></svg>
                  <span><b>Leaflet</b> | © <b>OpenStreetMap</b> contributors</span>
                </Attribution>
              </MapBox>
              <Hint>Drag and drop the pin on map to find exact location</Hint>
              <FieldLabel $gap={5}>Street View</FieldLabel>
              <StreetSelect>Hide<Chevron size={14} /></StreetSelect>
            </Panel>
          </MetaBody>
          <MetaHeader $height={45}>
            <HeaderTitle $spacing={0.25}>
              <svg width="15" height="12" viewBox="0 0 15 12"><g fill="#111"><circle cx="2" cy="3" r="1.500" /><circle cx="7.500" cy="2.500" r="2.400" /><circle cx="12.500" cy="2.500" r="1.500" /><path d="M0 8q0-3 3-3l1 1-1 3H0zM3.500 11q0-5 4-5 2 0 2.500 2l-.5 3z" /></g><circle cx="11.700" cy="7.500" r="2.200" fill="#fff" stroke="#111" strokeWidth="2" /></svg>
              Content Permissions
            </HeaderTitle>
            <Triangle $down />
          </MetaHeader>
          <Highlight />
          <ScrollThumb />
        </Editor>
        <Sidebar>
          <SideTabs>
            <SideTab $active>Property</SideTab>
            <SideTab>Block</SideTab>
            <CloseSlot><svg width="12" height="12"><path d="m2 2 8 8M10 2l-8 8" stroke="#1e1e1e" strokeWidth="1.700" /></svg></CloseSlot>
          </SideTabs>
          <Section $height={330}>
            <SectionHead $height={50}>Summary<Chevron up /></SectionHead>
            <InfoRow $height={52}><span>Visibility</span><Value>Public</Value></InfoRow>
            <InfoRow $height={40} $lift={11}><span>Publish</span><Value>June 3, 2024 3:38 pm<br />CEST</Value></InfoRow>
            <InfoRow $height={51}><span>URL</span><Value>showerme.app/proper...</Value></InfoRow>
            <Caps $top={1}>Author</Caps>
            <AuthorSelect>carlos<Chevron size={9} /></AuthorSelect>
            <ButtonRow>
              <OutlineButton $color="#007cba" $width={123}>Switch to draft</OutlineButton>
              <OutlineButton $color="#cc1818" $width={109}>Move to bin</OutlineButton>
            </ButtonRow>
          </Section>
          <Section $height={353}>
            <SectionHead $height={50}>Type<Chevron up /></SectionHead>
            <Caps $top={5}>Search categories</Caps>
            <SearchInput />
            <CheckList>
              {types.map((t, i) => (
                <CheckRow key={t}>
                  <CheckBox $checked={i === 0}>{i === 0 && <svg width="18" height="18"><path d="m4 10 3.500 3.500L14 5" fill="none" stroke="#fff" strokeWidth="1.500" /></svg>}</CheckBox>
                  {t}
                </CheckRow>
              ))}
            </CheckList>
            <AddLink>Add New Type</AddLink>
          </Section>
          <Section $height={200}>
            <SectionHead $height={50}>Status<Chevron up /></SectionHead>
            <Caps $top={4}>Search categories</Caps>
            <SearchInput />
            <CheckList><CheckRow><CheckBox $checked /></CheckRow></CheckList>
          </Section>
        </Sidebar>
      </Workspace>
      <Breadcrumb>Property</Breadcrumb>
      <Taskbar>
        {apps.map((a, i) => (
          <AppSlot key={i} $active={a.active}>
            {a.icon}
            {a.badge && <Badge>{a.badge}</Badge>}
            {a.dot && <RunDot $active={a.active} />}
          </AppSlot>
        ))}
        <Tray>
          <TrayIcon $gap={16}><svg width="16" height="16"><path fill="#3fae49" d="M1 2 8 0l7 2v6q0 5-7 8-7-3-7-8z" /><path d="m4 7 3 3 4-5" stroke="#fff" strokeWidth="1.800" fill="none" /><circle cx="12" cy="12" r="4" fill="#3fae49" stroke="#1d2a28" /><path d="m10 12 1.500 1.500L14 11" stroke="#fff" fill="none" /></svg></TrayIcon>
          <TrayIcon $gap={16}><svg width="16" height="16"><path fill="#9b6fd0" d="M1 15Q3 7 15 1q0 9-10 11z" /><path d="M1 15 10 6" stroke="#5d3f91" /></svg></TrayIcon>
          <TrayIcon $gap={15}><svg width="16" height="12" fill="none" stroke="#e8e8e8"><rect x=".5" y=".5" width="15" height="10" rx="1" /><path d="M3 3.500h10M3 5.500h10" strokeDasharray="1.500 1" /><path d="M4 8h8" /></svg></TrayIcon>
          <TrayIcon $gap={9}><svg width="17" height="16" fill="none" stroke="#f0f0f0" strokeWidth="1.200"><path d="M10 2.500H1.500v9h13V8M5 14.500h6M8 12v2.500" /><rect x="11.500" y="1" width="4" height="5" rx=".8" /></svg></TrayIcon>
          <TrayIcon $gap={9}><svg width="17" height="14" fill="none" stroke="#f0f0f0" strokeWidth="1.200"><path d="M1 5h2.500L7.500 1.500v11L3.500 9H1zM10 5q1.500 2 0 4M12 3.500q2.500 3.500 0 7M14 2q3.500 5 0 10" /></svg></TrayIcon>
          <Clock>9:31 AM<br />6/12/2024</Clock>
          <TrayIcon $gap={0}><svg width="14" height="15" fill="none" stroke="#f0f0f0" strokeWidth="1.200"><path d="M7 1Q3 1 3 6v3l-2 2.500h12L11 9V6Q11 1 7 1zM5.500 12.500q1.500 2 3 0" /></svg></TrayIcon>
        </Tray>
      </Taskbar>
    </Screen>
  );
}
